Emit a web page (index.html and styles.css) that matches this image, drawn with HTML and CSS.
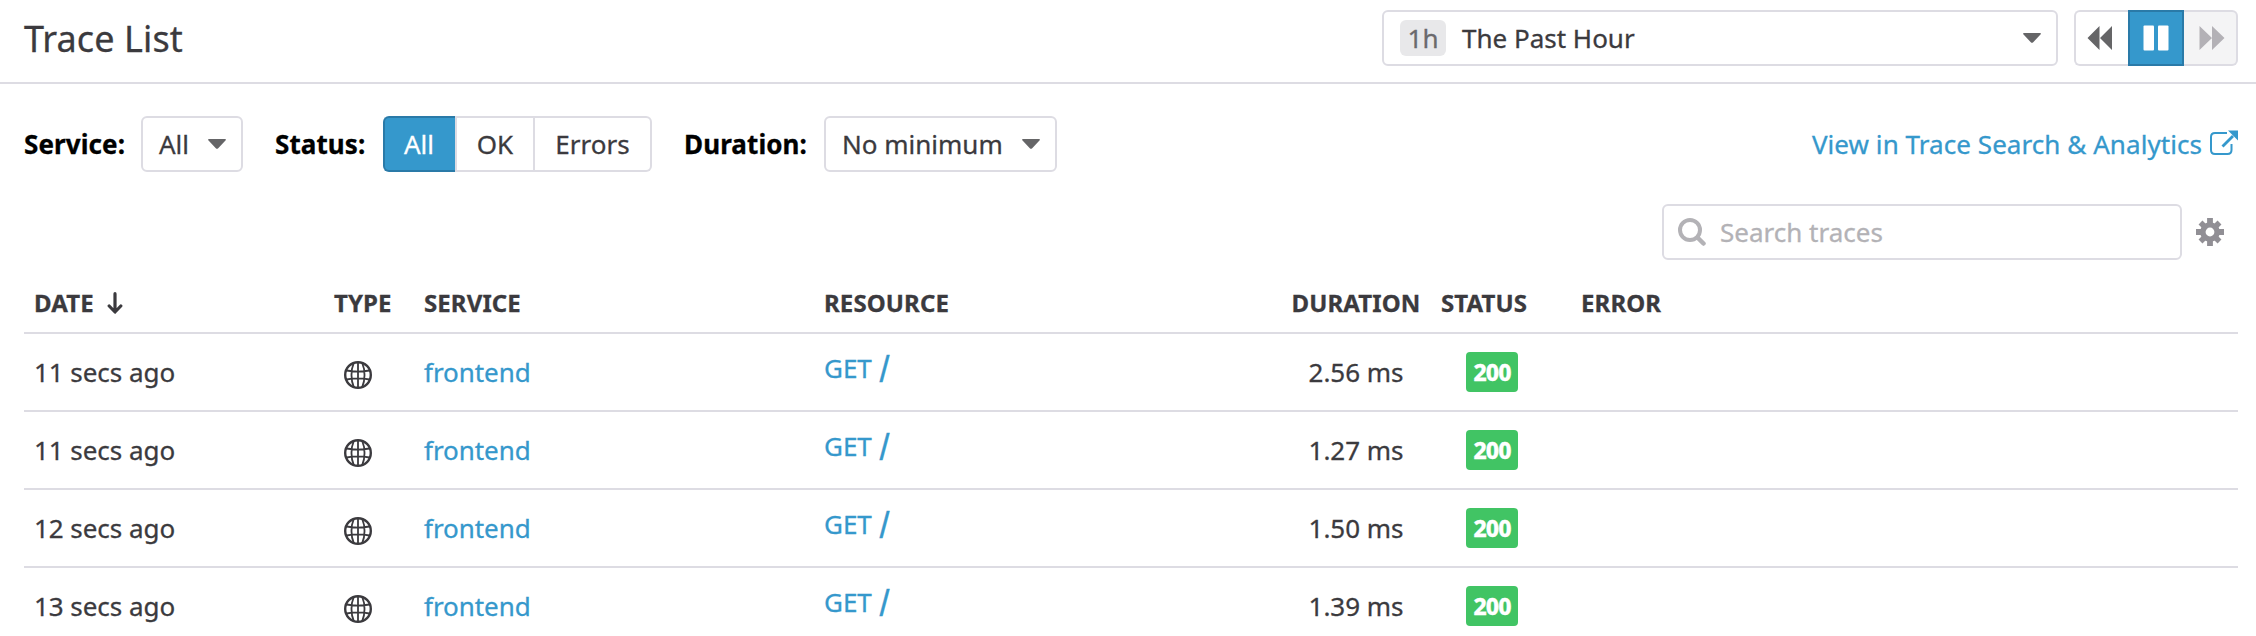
FILE: index.html
```html
<!DOCTYPE html>
<html lang="en">
<head>
<meta charset="utf-8">
<title>Trace List</title>
<link rel="stylesheet" href="styles.css">
</head>
<body>
<svg class="defs" width="0" height="0" aria-hidden="true">
  <symbol id="caret" viewBox="0 0 18 10"><path d="M1 0h16q1.600 .3.500 1.600l-7.300 7.600q-1.200 1.200-2.400 0L.5 1.600Q-.6.300 1 0z"/></symbol>
  <symbol id="globe" viewBox="0 0 28 28"><g fill="none" stroke="currentColor"><circle cx="14" cy="14" r="12.800" stroke-width="2.400"/><path stroke-width="1.800" d="M14 1v26M9.800 2C6.700 9 6.700 19 9.800 26M18.200 2c3.100 7 3.100 17 0 24M2.500 9.500q11.500 2.200 23 0M2.500 18.500q11.500-2.200 23 0"/></g></symbol>
</svg>
<header class="header">
  <h1 class="title">Trace List</h1>
  <div class="timeframe"><span class="timeframe-tag">1h</span><span class="timeframe-name">The Past Hour</span><svg class="caret"><use href="#caret"/></svg></div>
  <div class="player">
    <button class="play back"><svg width="26" height="26" viewBox="0 0 26 26"><path d="M.5 13 12.500 1v24zM13 13 25 1v24z"/></svg></button>
    <button class="play pause"><svg width="26" height="26" viewBox="0 0 26 26"><rect x=".500" y=".500" width="10.500" height="25" rx="1"/><rect x="15" y=".500" width="10.500" height="25" rx="1"/></svg></button>
    <button class="play forward"><svg width="26" height="26" viewBox="0 0 26 26"><path d="M.5 1v24l12.500-12zM13 1v24l12.500-12z"/></svg></button>
  </div>
</header>
<section class="filters">
  <span class="label label-service">Service:</span>
  <div class="select select-service">All<svg class="caret"><use href="#caret"/></svg></div>
  <span class="label label-status">Status:</span>
  <div class="segments"><span class="segment segment-active">All</span><span class="segment segment-ok">OK</span><span class="segment segment-errors">Errors</span></div>
  <span class="label label-duration">Duration:</span>
  <div class="select select-duration">No minimum<svg class="caret"><use href="#caret"/></svg></div>
  <a class="analytics"><span>View in Trace Search &amp; Analytics</span><svg class="external" width="28" height="26" viewBox="0 0 28 26"><path fill="none" stroke="currentColor" stroke-width="2" d="M17 3H5Q1 3 1 7v13q0 4 4 4h12.500q4 0 4-4v-6"/><path fill="none" stroke="currentColor" stroke-width="2.800" d="M12.500 16.500 23 6"/><path d="M18 .500h10v10z"/></svg></a>
</section>
<section class="search-row">
  <div class="search"><svg width="28" height="28" viewBox="0 0 28 28"><g fill="none" stroke="currentColor"><circle cx="12" cy="12" r="10" stroke-width="4"/><path d="m19.500 19.500 6 6" stroke-width="4.500" stroke-linecap="round"/></g></svg><span>Search traces</span></div>
  <svg class="gear" width="28" height="28" viewBox="0 0 28 28"><g stroke="currentColor" stroke-linejoin="round"><path stroke-width="5.800" d="M14 0v28M0 14h28"/><path stroke-width="5.500" d="m4.500 4.500 19 19m0-19-19 19"/></g><circle cx="14" cy="14" r="9.800"/><circle cx="14" cy="14" r="4.400" fill="#fff"/></svg>
</section>
<table class="traces">
  <colgroup><col class="col-date"><col class="col-type"><col class="col-service"><col class="col-resource"><col class="col-duration"><col class="col-status"><col></colgroup>
  <thead><tr><th>DATE<svg class="sort" width="16" height="22" viewBox="0 0 16 22"><path fill="none" stroke="currentColor" stroke-width="3.200" stroke-linecap="round" stroke-linejoin="round" d="M8 1.700V19M2.200 14 8 20l5.800-6"/></svg></th><th>TYPE</th><th>SERVICE</th><th>RESOURCE</th><th class="duration">DURATION</th><th class="status-head">STATUS</th><th>ERROR</th></tr></thead>
  <tbody>
    <tr><td>11 secs ago</td><td class="type"><svg class="globe"><use href="#globe"/></svg></td><td class="link">frontend</td><td class="link resource">GET <span class="slash">/</span></td><td class="duration">2.56 ms</td><td class="status"><span class="badge">200</span></td><td></td></tr>
    <tr><td>11 secs ago</td><td class="type"><svg class="globe"><use href="#globe"/></svg></td><td class="link">frontend</td><td class="link resource">GET <span class="slash">/</span></td><td class="duration">1.27 ms</td><td class="status"><span class="badge">200</span></td><td></td></tr>
    <tr><td>12 secs ago</td><td class="type"><svg class="globe"><use href="#globe"/></svg></td><td class="link">frontend</td><td class="link resource">GET <span class="slash">/</span></td><td class="duration">1.50 ms</td><td class="status"><span class="badge">200</span></td><td></td></tr>
    <tr><td>13 secs ago</td><td class="type"><svg class="globe"><use href="#globe"/></svg></td><td class="link">frontend</td><td class="link resource">GET <span class="slash">/</span></td><td class="duration">1.39 ms</td><td class="status"><span class="badge">200</span></td><td></td></tr>
  </tbody>
</table>
</body>
</html>
```
FILE: styles.css
```css
* { box-sizing: border-box; }
html, body { height: 636px; overflow: hidden; }
body {
  margin: 0;
  background: #fff;
  color: #3b3a3e;
  font: 26px/36px "Noto Sans", sans-serif;
  -webkit-text-stroke: .3px;
  white-space: nowrap;
}
svg { display: block; flex: none; fill: currentColor; }
.defs { position: absolute; }
.caret { width: 18px; height: 10px; color: #656567; margin-left: auto; }

.header {
  display: flex;
  align-items: center;
  height: 84px;
  padding: 0 18px 6px 24px;
  border-bottom: 2px solid #dddce3;
}
.title { margin: 0; padding-top: 2px; font-size: 36px; font-weight: 400; line-height: 48px; letter-spacing: .1px; }
.timeframe {
  display: flex;
  align-items: center;
  width: 676px;
  height: 56px;
  margin-left: auto;
  padding: 0 15px 0 16px;
  border: 2px solid #dddce3;
  border-radius: 6px;
}
.timeframe-tag {
  width: 46px;
  height: 36px;
  border-radius: 6px;
  background: #e8e8ea;
  color: #6b6a6d;
  text-align: center;
}
.timeframe-name { margin-left: 16px; }
.player { display: flex; margin-left: 16px; }
.play {
  display: flex;
  align-items: center;
  justify-content: center;
  width: 54px;
  height: 56px;
  padding: 0;
  border: 2px solid #dddce3;
  background: #fff;
  color: #656567;
}
.back { padding-right: 4px; border-right: 0; border-radius: 6px 0 0 6px; }
.pause { width: 56px; border-color: #2a7aa8; background: #3598cc; color: #fff; }
.forward { padding-left: 4px; border-left: 0; border-radius: 0 6px 6px 0; background: #f4f4f5; color: #b3b1b6; }

.filters { display: flex; align-items: center; height: 56px; margin: 32px 18px 0 24px; }
.label { color: #000; font-weight: 700; letter-spacing: .1px; }
.label-service { width: 117px; }
.label-status { width: 108px; margin-left: 32px; }
.label-duration { width: 140px; margin-left: 32px; }
.select {
  display: flex;
  align-items: center;
  height: 56px;
  padding: 0 15px 0 16px;
  border: 2px solid #dddce3;
  border-radius: 6px;
}
.select-service { width: 102px; }
.select-duration { width: 233px; }
.segments { display: flex; }
.segment {
  height: 56px;
  border: 2px solid #dddce3;
  border-left: 0;
  line-height: 52px;
  text-align: center;
}
.segment-active {
  width: 72px;
  padding-right: 2px;
  border: 2px solid #2a7aa8;
  border-right: 0;
  border-radius: 6px 0 0 6px;
  background: #3598cc;
  color: #fff;
}
.segment-ok { width: 80px; border-left: 2px solid #dddce3; }
.segment-errors { width: 117px; border-radius: 0 6px 6px 0; }
.analytics { display: flex; align-items: center; gap: 8px; margin-left: auto; color: #3598cc; letter-spacing: .06px; }
.external { margin-bottom: 2px; }

.search-row { display: flex; align-items: center; justify-content: flex-end; gap: 14px; margin: 32px 32px 0 0; }
.search {
  display: flex;
  align-items: center;
  gap: 14px;
  width: 520px;
  height: 56px;
  padding-left: 14px;
  border: 2px solid #dddce3;
  border-radius: 6px;
  color: #b3b2b6;
}
.gear { color: #918f95; }

.traces { width: 2214px; margin: 0 0 0 24px; border-collapse: separate; border-spacing: 0; table-layout: fixed; }
.col-date { width: 300px; }
.col-type { width: 90px; }
.col-service { width: 400px; }
.col-resource { width: 468px; }
.col-duration { width: 148px; }
.col-status { width: 141px; }
th, td { padding: 0 10px; border-bottom: 2px solid #dddce3; text-align: left; vertical-align: middle; }
th { height: 74px; padding-top: 14px; font-size: 24px; line-height: 34px; letter-spacing: .1px; }
td { height: 78px; letter-spacing: -.05px; }
.sort { display: inline-block; margin-left: 13px; vertical-align: -2px; }
.type { padding: 6px 0 0 20px; }
.globe { width: 28px; height: 28px; }
.link { color: #3598cc; }
.resource { padding-bottom: 8px; }
.slash {
  display: inline-block;
  margin-left: 1px;
  font: 36px/20px "Liberation Sans", sans-serif;
  vertical-align: -4px;
}
.duration { padding: 0; text-align: center; }
th.duration { padding-top: 14px; }
.status-head { padding-left: 11px; }
.status { padding-left: 36px; }
.badge {
  display: block;
  width: 52px;
  height: 40px;
  border-radius: 4px;
  background: #41c464;
  color: #fff;
  font-size: 23px;
  font-weight: 800;
  line-height: 40px;
  letter-spacing: -1px;
  text-align: center;
}
```
